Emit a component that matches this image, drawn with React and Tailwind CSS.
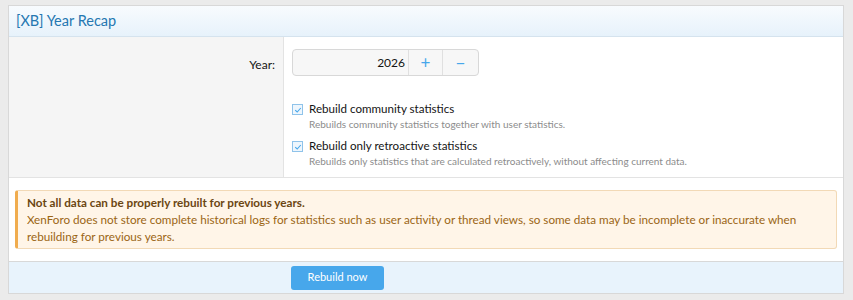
export default function App() {
  return (
    <div className="min-h-[300px] bg-[#ebebeb] pt-[5px] px-[8px] pb-[7px] font-['Lato',sans-serif]">
      <div className="border border-[#d8d8d8] bg-white w-[836px]">
        <h2 className="h-[31px] pl-[7px] flex items-center text-[14.5px] text-[#2577b1] bg-gradient-to-b from-[#f8fbfe] to-[#e7f2fb] border-b border-[#d5e3ee]">
          [XB] Year Recap
        </h2>

        <div className="flex">
          <div className="w-[275px] bg-[#f5f5f5] border-r border-[#e3e3e3] pr-[8px] pt-[19px] text-right text-[12px] text-[#141414]">
            Year:
          </div>
          <div className="flex-1 pl-[8px] pt-[12px] pb-[8px]">
            <div className="flex w-[187px] h-[27px] border border-[#d8d8d8] rounded-[4px] bg-[#f7f7f7] text-[12px]">
              <div className="flex-1 flex items-center justify-end pr-[3px] text-[#141414]">2026</div>
              <button className="w-[34px] border-l border-[#e0e0e0] text-[#47a7eb] text-[17px] leading-none">+</button>
              <button className="w-[36px] border-l border-[#e0e0e0] text-[#47a7eb] text-[17px] leading-none">−</button>
            </div>

            <div className="mt-[24px] space-y-[5px]">
              <Check label="Rebuild community statistics" hint="Rebuilds community statistics together with user statistics." />
              <Check label="Rebuild only retroactive statistics" hint="Rebuilds only statistics that are calculated retroactively, without affecting current data." />
            </div>
          </div>
        </div>

        <div className="border-t border-[#e3e3e3] px-[6px] pt-[12px] pb-[12px]">
          <div className="border border-[#f2d9b6] border-l-[3px] border-l-[#f0ac4e] rounded-[3px] bg-[#fff5e8] px-[9px] py-[3px] text-[11.7px] leading-[17px] text-[#9b6514]">
            <div className="font-bold text-[#6b4611]">Not all data can be properly rebuilt for previous years.</div>
            <div>
              XenForo does not store complete historical logs for statistics such as user activity or thread views, so some data may be incomplete or inaccurate when rebuilding for previous years.
            </div>
          </div>
        </div>

        <div className="border-t border-[#d8d8d8] bg-[#e8f3fc] h-[32px] flex items-center pl-[282px]">
          <button className="w-[93px] h-[24px] rounded-[3px] bg-[#47a7eb] text-white text-[11px]">Rebuild now</button>
        </div>
      </div>
    </div>
  )
}

function Check({ label, hint }) {
  return (
    <div className="flex items-start gap-[6px]">
      <span className="mt-[4px] w-[11px] h-[11px] border border-[#8fc3ea] bg-[#eef6fd] flex items-center justify-center">
        <svg viewBox="0 0 10 10" className="w-[8px] h-[8px]">
          <path d="M1.5 5.2 L4 7.5 L8.5 2.5" fill="none" stroke="#47a7eb" strokeWidth="1.4" />
        </svg>
      </span>
      <div>
        <div className="text-[11.6px] leading-[17px] text-[#141414]">{label}</div>
        <div className="text-[10px] leading-[15px] text-[#8c8c8c]">{hint}</div>
      </div>
    </div>
  )
}
